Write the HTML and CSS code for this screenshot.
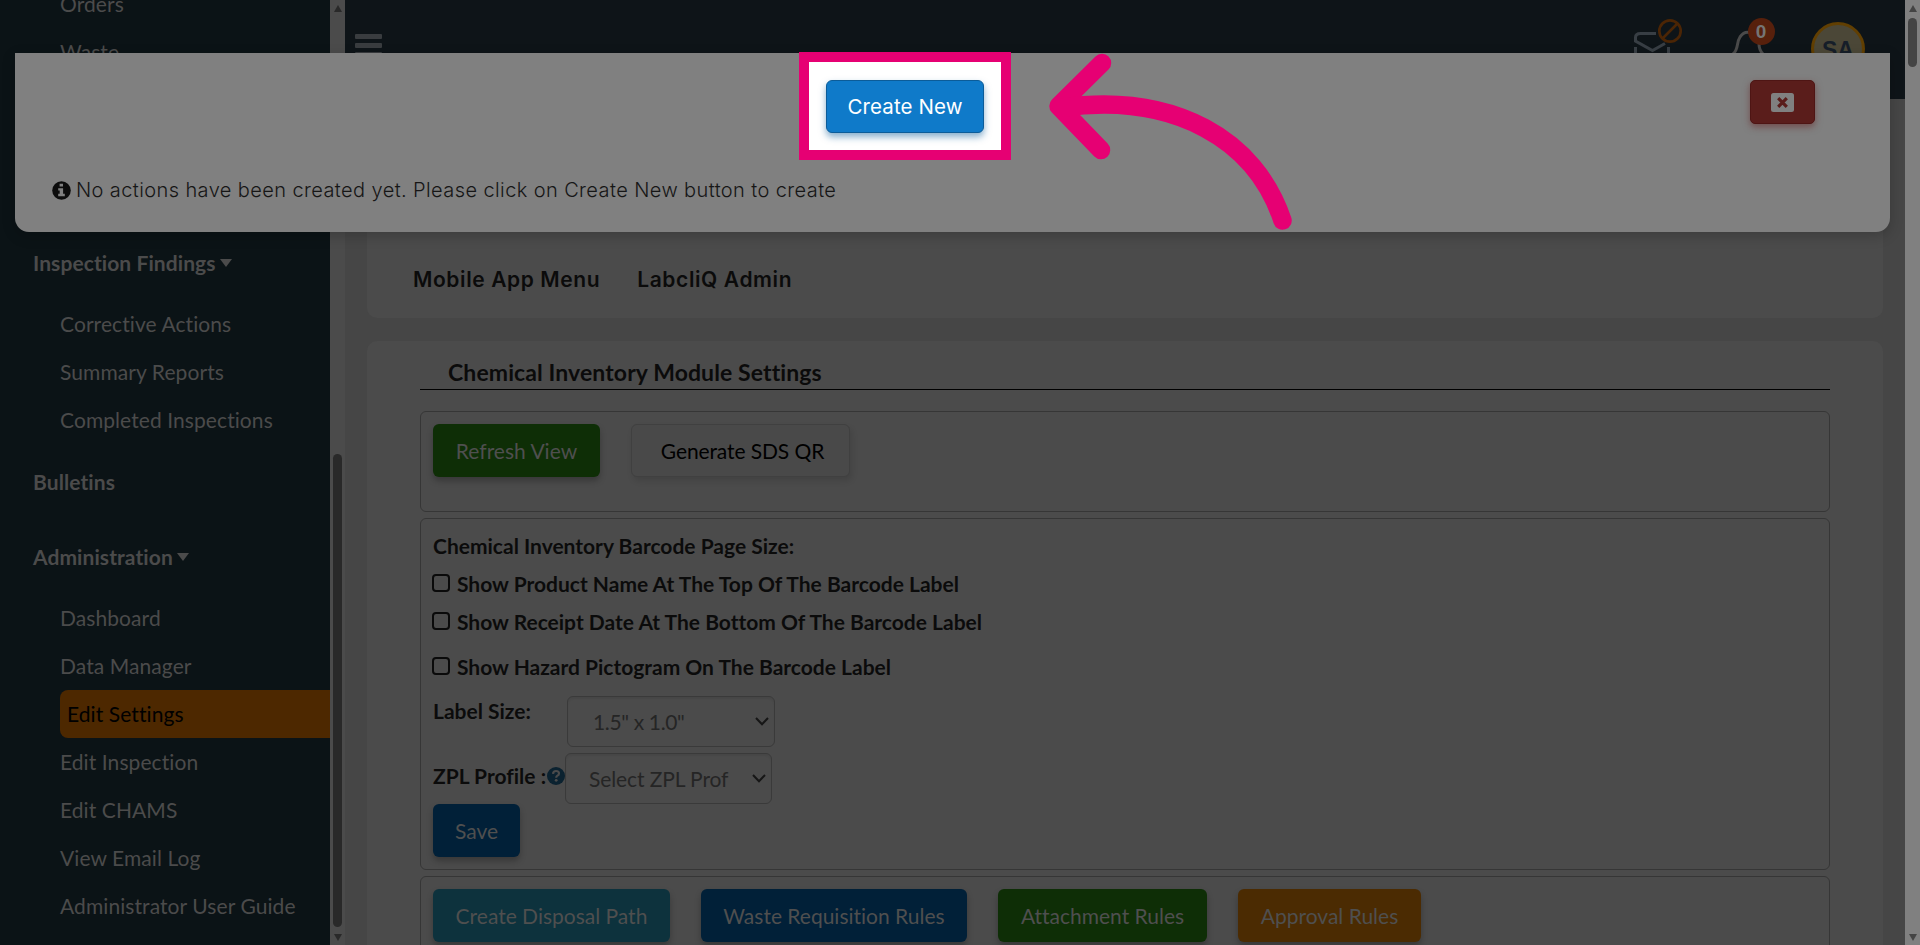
FILE: index.html
```html
<!DOCTYPE html>
<html lang="en">
<head>
<meta charset="utf-8">
<title>Chemical Inventory Module Settings</title>
<link rel="stylesheet" href="styles.css">
</head>
<body>
<div class="app">
  <nav class="sidebar">
    <div class="group first">
      <a class="item">Orders</a>
      <a class="item">Waste</a>
    </div>
    <div class="heading findings">Inspection Findings<i class="caret"></i></div>
    <div class="group">
      <a class="item">Corrective Actions</a>
      <a class="item">Summary Reports</a>
      <a class="item">Completed Inspections</a>
    </div>
    <div class="heading bulletins">Bulletins</div>
    <div class="heading admin">Administration<i class="caret"></i></div>
    <div class="group">
      <a class="item">Dashboard</a>
      <a class="item">Data Manager</a>
      <a class="item active">Edit Settings</a>
      <a class="item">Edit Inspection</a>
      <a class="item">Edit CHAMS</a>
      <a class="item">View Email Log</a>
      <a class="item">Administrator User Guide</a>
    </div>
  </nav>
  <div class="scroll side-scroll"><i class="up"></i><i class="thumb"></i><i class="down"></i></div>

  <div class="main">
    <header class="topbar">
      <div class="burger"><i></i><i></i><i></i></div>
      <div class="tools">
        <svg class="mail" width="50" height="54" viewBox="0 0 50 54" fill="none">
          <path d="M22 15.500H6.500Q1.500 15.500 1.500 19.500V23L18.500 32.500L31 25.500M1.500 29V54M34.500 29V54" stroke="#383e44" stroke-width="3"/>
          <circle cx="36" cy="13" r="10.700" stroke="#4b2505" stroke-width="2.700"/>
          <path d="M28.500 20.500L43.500 5.500" stroke="#4b2505" stroke-width="2.700"/>
        </svg>
        <svg class="bell" width="48" height="54" viewBox="0 0 48 54" fill="none">
          <path d="M1 36C7 31 4 25 8 19Q12 13.500 17 14.500Q27 16 27 26Q27 32 31 36" stroke="#4a4a4a" stroke-width="3"/>
          <circle cx="29.500" cy="13.500" r="13.500" fill="#57200c"/>
          <text x="29" y="19.800" text-anchor="middle" class="badge">0</text>
        </svg>
        <div class="avatar">SA</div>
      </div>
    </header>
    <section class="card tabs"><span class="tab one">Mobile App Menu</span><span class="tab two">LabcliQ Admin</span></section>
    <section class="card settings">
      <h2 class="title"><span>Chemical Inventory Module Settings</span></h2>
      <div class="box actions">
        <button class="btn green refresh">Refresh View</button>
        <button class="btn plain">Generate SDS QR</button>
      </div>
      <div class="box form">
        <div class="line l0">Chemical Inventory Barcode Page Size:</div>
        <label class="line l1"><i class="check"></i>Show Product Name At The Top Of The Barcode Label</label>
        <label class="line l2"><i class="check"></i>Show Receipt Date At The Bottom Of The Barcode Label</label>
        <label class="line l3"><i class="check"></i>Show Hazard Pictogram On The Barcode Label</label>
        <div class="field size"><span class="name">Label Size:</span>
          <div class="select"><span class="value">1.5" x 1.0"</span><svg width="14" height="9" viewBox="0 0 14 9"><path d="M1 1L7 7.300L13 1" fill="none" stroke="#161616" stroke-width="2"/></svg></div>
        </div>
        <div class="field zpl"><span class="name">ZPL Profile :</span>
          <svg class="help" width="18" height="18" viewBox="0 0 18 18"><circle cx="9" cy="9" r="9" fill="#0b2230"/><path d="M6 6.800Q6.200 4 9 4Q12 4 12 6.500Q12 8 10.300 8.700Q9.200 9.200 9.200 10.700" fill="none" stroke="#4b4b4b" stroke-width="2.200"/><circle cx="9.200" cy="13.300" r="1.400" fill="#4b4b4b"/></svg>
          <div class="select"><span class="value">Select ZPL Prof</span><svg width="14" height="9" viewBox="0 0 14 9"><path d="M1 1L7 7.300L13 1" fill="none" stroke="#161616" stroke-width="2"/></svg></div>
        </div>
        <button class="btn blue save">Save</button>
      </div>
      <div class="box rules">
        <button class="btn teal r1">Create Disposal Path</button>
        <button class="btn blue r2">Waste Requisition Rules</button>
        <button class="btn green r3">Attachment Rules</button>
        <button class="btn amber r4">Approval Rules</button>
      </div>
    </section>
  </div>
  <div class="scroll page-scroll"><i class="up"></i><i class="thumb"></i><i class="down"></i></div>
</div>

<div class="modal">
  <div class="modal-head">
    <div class="spotlight"><button class="create">Create New</button></div>
    <button class="close"><svg width="23" height="19" viewBox="0 0 23 19"><rect width="23" height="19" rx="2.500" fill="#808080"/><path d="M7.200 5.200L15.800 13.800M15.800 5.200L7.200 13.800" stroke="#5a1d1b" stroke-width="3.200"/></svg></button>
  </div>
  <p class="note"><svg width="19" height="19" viewBox="0 0 19 19"><circle cx="9.500" cy="9.500" r="9.300" fill="#0d0d0d"/><path d="M7.600 2.800h3.400v2.800H7.600zM6.200 7.300h4.900v5.500h1.700v2.400H6.200v-2.400h1.500V9.600H6.200z" fill="#808080"/></svg><span>No actions have been created yet. Please click on Create New button to create</span></p>
</div>
<svg class="arrow" width="260" height="190" viewBox="1040 46 260 190" fill="none" stroke="#e60073" stroke-width="18.500" stroke-linecap="round" stroke-linejoin="round">
  <path d="M1102 63L1058.500 106L1101 150"/>
  <path d="M1062 107.500C1175 92 1256 140 1282.500 220.500"/>
</svg>
</body>
</html>
```
FILE: styles.css
```css
* { box-sizing: border-box; }
body { margin: 0; height: 945px; overflow: hidden; background: #464646; font-family: Lato, sans-serif; font-size: 21px; font-variant-ligatures: none; color: #0b0b0b; }
button { font-family: inherit; font-size: inherit; font-variant-ligatures: none; padding: 0; border: 0; }
.app { display: flex; height: 945px; overflow: hidden; }

/* Sidebar */
.sidebar { width: 330px; height: 945px; overflow: hidden; background: #0b1316; color: #4b4b4b; flex: none; letter-spacing: .08px; }
.group { padding-left: 60px; }
.group.first { margin-top: -20px; }
.item { display: block; height: 48px; line-height: 48px; white-space: nowrap; }
.item.active { background: #4d2800; color: #000; border-radius: 8px 0 0 8px; padding-left: 7px; }
.heading { height: 48px; line-height: 48px; padding-left: 33px; font-weight: 700; display: flex; align-items: center; }
.findings { margin: 163px 0 13px; }
.bulletins { margin: 14px 0 27px; }
.admin { margin-bottom: 13px; }
.caret { border: 6.5px solid transparent; border-top: 8px solid #4b4b4b; border-bottom: 0; margin-left: 4px; }

/* Scrollbars */
.scroll { width: 15px; height: 945px; flex: none; display: flex; flex-direction: column; align-items: center; padding: 5px 0 4px; }
.side-scroll { background: #4b4b4b; }
.page-scroll { background: #808080; }
.up, .down { border: 4.5px solid transparent; height: 7px; flex: none; }
.up { border-top: 0; border-bottom: 7px solid #292929; }
.down { border-bottom: 0; border-top: 7px solid #292929; margin-top: auto; }
.thumb { width: 9px; border-radius: 5px; background: #292929; }
.side-scroll .thumb { height: 473px; margin-top: 442px; }
.page-scroll .thumb { height: 49px; margin-top: 6px; background: #444; }
.page-scroll .up { border-bottom-color: #444; }
.page-scroll .down { border-top-color: #444; }

/* Main column */
.main { width: 1560px; height: 945px; overflow: hidden; flex: none; }
.topbar { height: 99px; background: #0e1418; display: flex; justify-content: space-between; }
.burger { padding: 34px 0 0 10px; display: flex; flex-direction: column; gap: 4px; }
.burger i { width: 27px; height: 5px; border-radius: 1px; background: #393c3f; }
.tools { display: flex; padding: 18px 40px 0 0; }
.mail { margin-right: 48px; }
.bell { margin-right: 31px; }
.badge { font: 700 19px "Liberation Sans", sans-serif; fill: #757575; }
.avatar { width: 54px; height: 54px; margin-top: 4px; border: 3px solid #613f02; border-radius: 50%; background: #4b4737; color: #161e29; font: 700 23px/51px "Liberation Sans", sans-serif; text-align: center; }
.card { width: 1516px; margin-left: 22px; background: #4b4b4b; border-radius: 10px; }
.tabs { height: 219px; border-radius: 0 0 10px 10px; padding: 165px 0 0 46px; display: flex; gap: 37px; font: 600 21px/32px Inter, sans-serif; letter-spacing: .6px; }
.settings { height: 640px; margin-top: 23px; padding: 0 53px; }
.title { height: 49px; margin: 0 0 21px; border-bottom: 1px solid #000; padding: 12px 0 0 28px; font-size: 23px; line-height: 38px; font-weight: 700; letter-spacing: .1px; }
.box { border: 1px solid #363636; border-radius: 6px; margin-bottom: 6px; padding: 12px; }
.btn { height: 53px; border-radius: 6px; color: #4f4f4f; white-space: nowrap; flex: none; text-align: center; box-shadow: 0 4px 6px rgba(0,0,0,.25); }
.green { background: #0e2e06; }
.blue { background: #012038; }
.teal { background: #0d323d; }
.amber { background: #4b2b02; }
.plain { width: 219px; background: #494949; color: #000; border: 1px solid #404040; padding-left: 4px; letter-spacing: -.1px; box-shadow: 2px 4px 6px rgba(0,0,0,.12); }
.actions { height: 101px; display: flex; gap: 31px; }
.refresh { width: 167px; }

/* Barcode form */
.form { height: 352px; padding-top: 7px; font-weight: 700; }
.line { display: flex; align-items: center; height: 38px; white-space: nowrap; }
.l3 { margin-top: 7px; }
.check { width: 18px; height: 18px; border: 2px solid #0a0a0a; border-radius: 4px; margin: 0 7px 0 -1px; }
.field { display: flex; height: 51px; }
.size { margin-top: 11px; }
.zpl { margin-top: 6px; align-items: center; }
.name { width: 134px; line-height: 30px; white-space: nowrap; }
.zpl .name { width: 114px; padding-bottom: 6px; }
.help { flex: none; margin-bottom: 5px; }
.select { width: 208px; height: 51px; border: 1px solid #3a3a3a; border-radius: 6px; padding: 0 5px 0 25px; display: flex; align-items: center; justify-content: space-between; color: #252525; font-weight: 400; letter-spacing: -.1px; box-shadow: inset 0 2px 2px rgba(0,0,0,.06); }
.size .value { letter-spacing: -.35px; }
.zpl .select { padding-left: 23px; width: 207px; }
.value { white-space: nowrap; }
.save { width: 87px; display: block; }
.rules { height: 120px; display: flex; }
.r1 { width: 237px; margin-right: 31px; }
.r2 { width: 266px; margin-right: 31px; }
.r3 { width: 209px; margin-right: 31px; }
.r4 { width: 183px; }

/* Dialog layered over the page */
.modal { position: absolute; left: 15px; top: 53px; width: 1875px; height: 179px; background: #808080; border-radius: 0 0 14px 14px; box-shadow: 0 4px 14px rgba(0,0,0,.2); }
.modal-head { display: flex; justify-content: space-between; align-items: flex-start; padding: 0 75px 0 784px; height: 107px; }
.spotlight { width: 212px; height: 108px; margin-top: -1px; border: 10px solid #e60073; background: #fff; padding: 18px 17px; }
.create { display: block; width: 158px; height: 53px; border: 1px solid #0b5c99; border-radius: 6px; background: #0f7ac9; color: #fff; font: 400 20.5px Inter, sans-serif; letter-spacing: .1px; box-shadow: 0 4px 7px rgba(15,95,155,.5); }
.close { width: 65px; height: 44px; margin-top: 27px; border-radius: 5px; background: #5a1d1b; border: 1px solid #4e1514; display: grid; place-items: center; box-shadow: 0 3px 7px rgba(100,25,25,.5); }
.note { margin: 12px 0 0; padding-left: 37px; display: flex; align-items: center; gap: 5px; height: 36px; font: 300 20px Inter, sans-serif; letter-spacing: .4px; color: #161616; white-space: nowrap; }
.arrow { position: absolute; left: 1040px; top: 46px; }
```
